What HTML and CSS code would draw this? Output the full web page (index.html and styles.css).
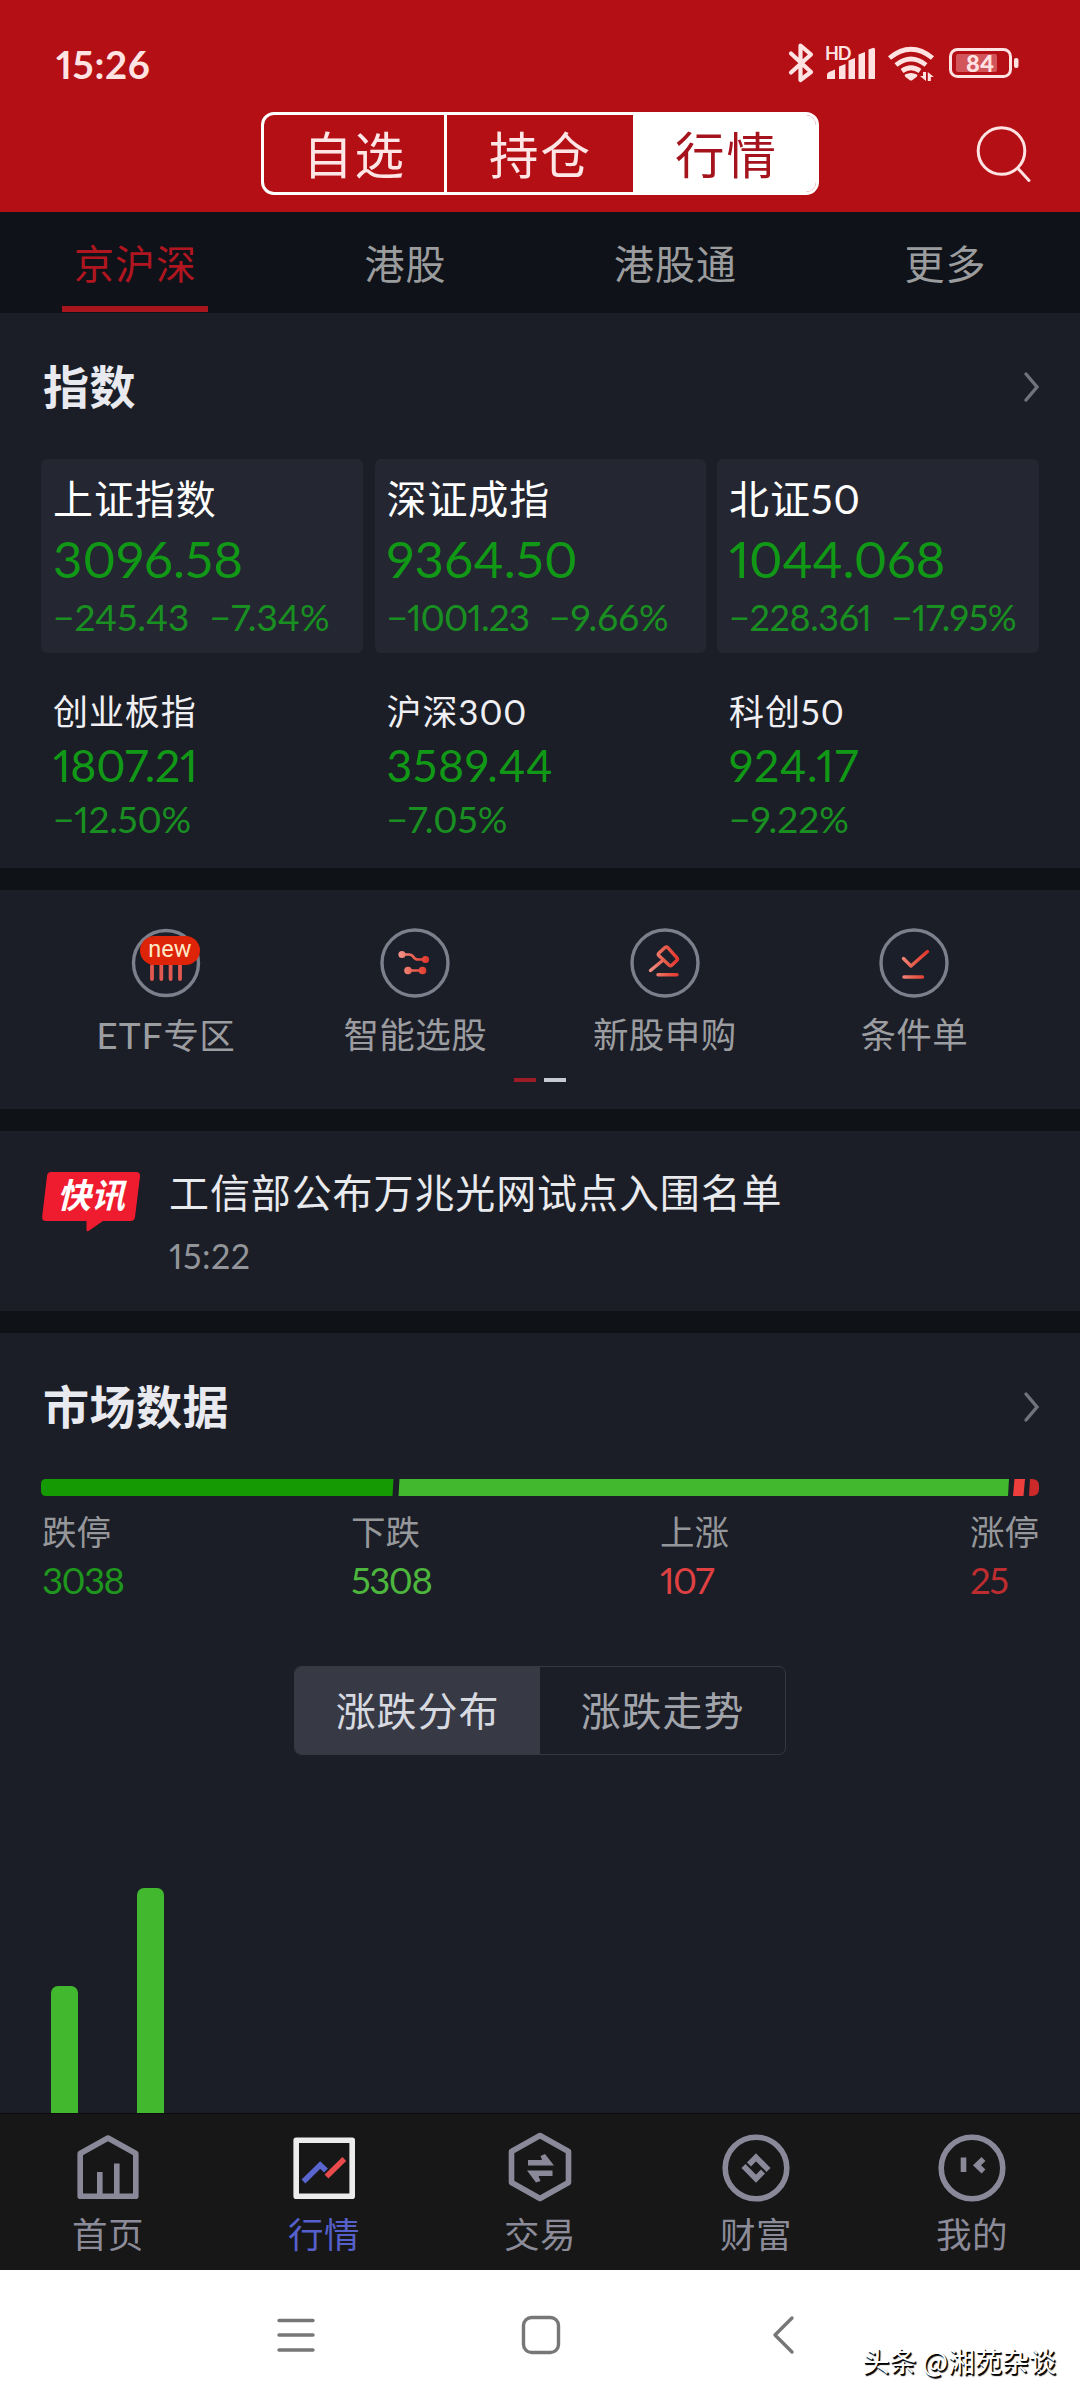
FILE: index.html
```html
<!DOCTYPE html>
<html lang="zh-CN">
<head>
<meta charset="utf-8">
<title>行情</title>
<link rel="stylesheet" href="styles.css">
</head>
<body>
<div class="screen">
  <header class="header">
    <div class="status">
      <span class="clock">15:26</span>
      <svg class="status-icons" width="240" height="52" viewBox="784 37 240 52">
        <path d="M791 53.500L811 72L800.500 80V45.500L811 54.500L791 72.500" fill="none" stroke="#ffe3e3" stroke-width="4.200" stroke-linejoin="round" stroke-linecap="round"/>
        <text x="825" y="59.500" class="hd">HD</text>
        <g fill="#ffe3e3">
          <path d="M827 75q0-2 2-3l6-2.500v9.500h-8zM839 66.500l6.500-2.500v15H839zM848.500 60.500l6.500-2.500v21h-6.500zM858.500 54.500l6.500-2.500v27h-6.500zM868.500 49.500l5-1.800q1.500 0 1.500 1.800v29.500h-6.500z"/>
          <path d="M905 74.500q6-3 12 0q1 1-.5 2.500l-4 3q-1.500 1-3 0l-4-3q-1.500-1.500-.5-2.500z"/>
          <path d="M926 72v9l-6-5h3v-4zM927.800 81v-9l6 5h-3v4z"/>
        </g>
        <g fill="none" stroke="#ffe3e3" stroke-width="4.800">
          <path d="M889.500 58Q911 40.500 932.500 58"/>
          <path d="M896 65Q911 53 926 65"/>
          <path d="M902 71Q911 64.500 920 71"/>
        </g>
        <rect x="950.500" y="49.500" width="60" height="27" rx="7" fill="none" stroke="#ffe3e3" stroke-width="3"/>
        <rect x="1014" y="58" width="4.500" height="10" rx="2" fill="#ffe3e3"/>
        <rect x="956" y="54" width="41" height="18" rx="2" fill="#d2555a"/>
        <text x="980" y="71.500" class="battery" text-anchor="middle">84</text>
      </svg>
    </div>
    <div class="header-row">
      <nav class="segments">
        <a class="segment">自选</a>
        <a class="segment">持仓</a>
        <a class="segment segment-on">行情</a>
      </nav>
      <svg class="search" width="56" height="60" viewBox="0 0 56 60" fill="none" stroke="#ffe3e3" stroke-width="3" stroke-linecap="round">
        <circle cx="25.500" cy="26" r="23.300"/><path d="M42 43.500L53 55.500"/>
      </svg>
    </div>
  </header>

  <nav class="tabs">
    <a class="tab tab-on">京沪深</a>
    <a class="tab">港股</a>
    <a class="tab">港股通</a>
    <a class="tab">更多</a>
  </nav>

  <section class="panel indices">
    <div class="panel-head">
      <h2>指数</h2>
      <svg class="chevron" width="16" height="32" viewBox="0 0 16 32"><path d="M3 3L14 16L3 29"/></svg>
    </div>
    <div class="cards">
      <div class="card">
        <div class="name">上证指数</div>
        <div class="value">3096.58</div>
        <div class="change"><span>−245.43</span><span>−7.34%</span></div>
      </div>
      <div class="card">
        <div class="name">深证成指</div>
        <div class="value">9364.50</div>
        <div class="change"><span class="narrow">−1001.23</span><span>−9.66%</span></div>
      </div>
      <div class="card card-tight">
        <div class="name">北证50</div>
        <div class="value snug">1044.068</div>
        <div class="change"><span>−228.361</span><span>−17.95%</span></div>
      </div>
    </div>
    <div class="minis">
      <div class="mini"><div class="name">创业板指</div><div class="value snug">1807.21</div><div class="change snug">−12.50%</div></div>
      <div class="mini"><div class="name">沪深300</div><div class="value wide">3589.44</div><div class="change">−7.05%</div></div>
      <div class="mini"><div class="name">科创50</div><div class="value wide">924.17</div><div class="change">−9.22%</div></div>
    </div>
  </section>

  <section class="panel tools">
    <svg width="0" height="0" class="defs">
      <defs><linearGradient id="warm" gradientUnits="userSpaceOnUse" x1="18" y1="0" x2="52" y2="0"><stop offset="0" stop-color="#f59a92"/><stop offset=".5" stop-color="#e8604f"/><stop offset="1" stop-color="#e22f28"/></linearGradient></defs>
    </svg>
    <div class="tool-row">
      <div class="tool">
        <div class="tool-icon">
          <svg width="72" height="72" viewBox="0 0 72 72"><circle class="ring" cx="36" cy="36" r="32.500"/><path d="M22 39V52M31.300 38V52M40.600 38V52M50 38V52" class="glyph etf"/></svg>
          <span class="new">new</span>
        </div>
        <span class="tool-label"><span class="latin">ETF</span>专区</span>
      </div>
      <div class="tool">
        <div class="tool-icon">
          <svg width="72" height="72" viewBox="0 0 72 72"><circle class="ring" cx="36" cy="36" r="33"/><path class="glyph thin" d="M23 27.500H30Q33 27.500 34.500 30Q36 32.500 39 32.500H47M29 43.500H43"/><g fill="url(#warm)"><circle cx="23" cy="27.500" r="3.600"/><circle cx="46.500" cy="32.500" r="3.600"/><circle cx="29" cy="43.500" r="3.800"/><circle cx="43.500" cy="43.500" r="3.800"/></g></svg>
        </div>
        <span class="tool-label">智能选股</span>
      </div>
      <div class="tool">
        <div class="tool-icon">
          <svg width="72" height="72" viewBox="0 0 72 72"><circle class="ring" cx="36" cy="36" r="33"/><path class="glyph" d="M29.500 26.500L36 20.500Q37.500 19.300 39 20.800L48 30.800Q49 32 48 33.300L43 38Q41.500 39.500 40 38L29.500 28.200Q28.800 27.300 29.500 26.500ZM33 34L21.500 43.500M29 47.800H48"/></svg>
        </div>
        <span class="tool-label">新股申购</span>
      </div>
      <div class="tool">
        <div class="tool-icon">
          <svg width="72" height="72" viewBox="0 0 72 72"><circle class="ring" cx="36" cy="36" r="33"/><path class="glyph" d="M25.500 31.500L33 39L49.500 24.500M26 50H44.500"/></svg>
        </div>
        <span class="tool-label">条件单</span>
      </div>
    </div>
    <div class="pager"><i class="dot dot-on"></i><i class="dot"></i></div>
  </section>

  <section class="panel news">
    <svg class="flash" width="98" height="60" viewBox="0 0 98 60">
      <path d="M9 0H94Q98.500 0 98 4.500L93 45Q92.500 49 88.500 49H61L46.500 59Q44.500 60 44.500 58V49H4Q-.3 49 .2 44.500L5 4Q5.500 0 9 0Z" fill="#ee1c2e"/>
      <text x="49" y="36" text-anchor="middle" class="flash-text">快讯</text>
    </svg>
    <div class="news-body">
      <div class="news-title">工信部公布万兆光网试点入围名单</div>
      <div class="news-time">15:22</div>
    </div>
  </section>

  <section class="panel market">
    <div class="panel-head">
      <h2>市场数据</h2>
      <svg class="chevron" width="16" height="32" viewBox="0 0 16 32"><path d="M3 3L14 16L3 29"/></svg>
    </div>
    <svg class="ratio" width="998" height="17" viewBox="0 0 998 17">
      <path d="M5 0H352.500L351.500 17H5Q0 17 0 12V5Q0 0 5 0Z" fill="#169a04"/>
      <path d="M358.500 0H968L967 17H357.500Z" fill="#42b82f"/>
      <path d="M973.500 0H984L982.500 17H972Z" fill="#ee3f3d"/>
      <path d="M989 0H991Q998 0 998 7V10Q998 17 991 17H988Z" fill="#cc2a2a"/>
    </svg>
    <div class="counts">
      <div class="count dark-green"><span>跌停</span><b>3038</b></div>
      <div class="count green"><span>下跌</span><b>5308</b></div>
      <div class="count red"><span>上涨</span><b>107</b></div>
      <div class="count dark-red"><span>涨停</span><b>25</b></div>
    </div>
    <div class="switch">
      <a class="switch-item switch-on">涨跌分布</a>
      <a class="switch-item">涨跌走势</a>
    </div>
    <div class="chart">
      <i class="bar" style="height:127px"></i>
      <i class="bar" style="height:225px"></i>
    </div>
  </section>

  <nav class="bottom">
    <a class="item">
      <svg width="76" height="76" viewBox="0 0 76 76"><path class="line" d="M10.200 68.300V25.500L38 10L65.800 25.500V68.300Z"/><path class="stem" d="M29.800 67V44M46.800 67V35.500"/></svg>
      <span>首页</span>
    </a>
    <a class="item item-on">
      <svg width="76" height="76" viewBox="0 0 76 76"><rect x="10.200" y="12.200" width="56" height="56" fill="#171717" stroke="#ececec" stroke-width="5.600" stroke-linejoin="round"/><path d="M17.500 53.500L34.200 37L40 42.500" fill="none" stroke="#5a66cf" stroke-width="5.400"/><path d="M40.500 48.500L58.300 31" stroke="#e94b4b" stroke-width="5.400"/></svg>
      <span>行情</span>
    </a>
    <a class="item">
      <svg width="76" height="76" viewBox="0 0 76 76"><path class="line" d="M38 7.500L66.500 23.500V54.500L38 70.500L9.500 54.500V23.500Z"/><path class="solid" d="M26 32H40L38.500 28L43 26L52 37.500H26ZM50.500 42.500H25L34 54.500L38.500 53L36.500 48H50.500Z"/></svg>
      <span>交易</span>
    </a>
    <a class="item">
      <svg width="76" height="76" viewBox="0 0 76 76"><circle class="line" cx="38" cy="40" r="30.800"/><path class="line coin" d="M31 36.500L38 29.200L50.500 42M45 43.500L38 50.800L25.500 38"/></svg>
      <span>财富</span>
    </a>
    <a class="item">
      <svg width="76" height="76" viewBox="0 0 76 76"><circle class="line" cx="38" cy="40" r="30.800"/><path class="line coin" d="M29.500 29.500V44M49.500 31L43 37.300L49.500 43.500"/></svg>
      <span>我的</span>
    </a>
  </nav>

  <footer class="system">
    <svg width="40" height="36" viewBox="0 0 40 36"><path d="M3 3.500H37M3 18H37M3 33H37"/></svg>
    <svg width="40" height="40" viewBox="0 0 40 40"><rect x="2.500" y="2.500" width="35" height="35" rx="8"/></svg>
    <svg width="30" height="40" viewBox="-6 0 30 40"><path d="M21 3L4 20L21 37"/></svg>
    <span class="watermark">头条 @湘苑杂谈</span>
  </footer>
</div>
</body>
</html>
```
FILE: styles.css
```css
* { box-sizing: border-box; }

body {
  margin: 0;
  background: #0f1217;
  color: #e8e9ee;
  font-family: Lato, "Noto Sans CJK SC", sans-serif;
  font-feature-settings: "pnum";
}

svg { display: block; flex: none; overflow: visible; }

.screen {
  width: 1080px;
  height: 2400px;
  display: flex;
  flex-direction: column;
  overflow: hidden;
}

/* header */
.header { height: 212px; flex: none; background: #b40f14; }
.status {
  height: 112px;
  padding: 37px 56px 0 56px;
  display: flex;
  justify-content: space-between;
  align-items: flex-start;
}
.clock { font-size: 38.500px; line-height: 54px; font-weight: 700; color: #ffe3e3; letter-spacing: .7px; }
.hd { font-size: 18px; fill: #ffe3e3; font-weight: 700; letter-spacing: -1px; }
.battery { font-size: 23.500px; fill: #ffe3e3; font-weight: 900; }

.header-row { display: flex; justify-content: flex-end; align-items: flex-start; padding-right: 48px; }
.segments {
  width: 558px;
  height: 83px;
  margin-right: 157px;
  display: grid;
  grid-template-columns: 183px 189px 1fr;
  border: 3px solid #fff;
  border-radius: 13px;
  overflow: hidden;
}
.segment {
  padding: 3px 0 0 1px;
  border-right: 3px solid #fff;
  font-size: 49.500px;
  letter-spacing: 2px;
  line-height: 74px;
  text-align: center;
  color: #ffe6e6;
}
.segment-on { background: #fff; color: #a5131c; border-right: 0; }
.search { margin-top: 13px; }

/* market tabs */
.tabs { height: 101px; flex: none; background: #0f1218; display: grid; grid-template-columns: repeat(4, 270px); justify-items: center; }
.tab { height: 100px; min-width: 146px; text-align: center; padding-left: 1px; line-height: 104px; font-size: 40px; letter-spacing: 1px; color: #9b9c9e; }
.tab-on { color: #b01620; border-bottom: 6px solid #a9151c; }

/* panels */
.panel { background: #1b1e26; padding: 0 41px; margin-bottom: 22px; flex: none; }
.panel-head { display: flex; justify-content: space-between; align-items: center; height: 60px; padding-left: 2px; }
h2 { margin: 0; font-size: 46px; line-height: 60px; letter-spacing: .5px; font-weight: 700; color: #e9eaef; }
.chevron path { fill: none; stroke: #70737b; stroke-width: 3.400; stroke-linecap: round; }

/* indices */
.indices { height: 555px; padding-top: 44px; }
.cards, .minis { display: grid; grid-template-columns: 322px 331px 322px; column-gap: 11.500px; }
.cards { margin-top: 42px; }
.card { height: 194px; padding: 16px 0 0 12px; border-radius: 6px; background: #242731; white-space: nowrap; }
.name { color: #fff; font-size: 40px; line-height: 48px; letter-spacing: .9px; }
.value { color: #119816; font-size: 51px; line-height: 60px; margin-top: 6px; letter-spacing: .2px; }
.change { color: #198f22; font-size: 37px; line-height: 44px; margin-top: 6px; display: flex; gap: 20px; }
.card-tight .change { font-size: 36px; letter-spacing: -.4px; }
.minis { margin-top: 36px; }
.mini { padding-left: 12px; }
.mini .name { font-size: 35px; line-height: 44px; color: #f0f0f4; }
.mini .value { font-size: 44.500px; line-height: 54px; margin-top: 5px; }
.mini .change { margin-top: 6px; line-height: 42px; }
.snug { letter-spacing: -.3px; }
.narrow { letter-spacing: -1px; }
.wide { letter-spacing: .8px; }

/* tool shortcuts */
.tools { height: 219px; padding-top: 37px; }
.defs { position: absolute; }
.tool-row { display: grid; grid-template-columns: repeat(4, 1fr); }
.tool { display: flex; flex-direction: column; align-items: center; }
.tool-icon { position: relative; height: 72px; }
.ring { fill: #1b1f2a; stroke: #7c7f8c; stroke-width: 3.400; }
.glyph { fill: none; stroke: url(#warm); stroke-width: 3.400; stroke-linecap: round; stroke-linejoin: round; }
.etf { stroke: #e0584f; stroke-width: 3.800; }
.thin { stroke-width: 2.600; }
.new {
  position: absolute;
  left: 10px;
  top: 9px;
  width: 60px;
  height: 29px;
  border-radius: 15px;
  background: #de2408;
  color: #ffe9c9;
  font: 23.500px/27px Roboto, sans-serif;
  text-align: center;
}
.tool-label { margin-top: 12px; font-size: 35.500px; line-height: 48px; letter-spacing: .4px; color: #9c9da1; }
.latin { font-size: 37px; letter-spacing: 1px; }
.pager { margin-top: 18px; display: flex; justify-content: center; gap: 8px; }
.dot { width: 22px; height: 4px; background: #c5cad5; }
.dot-on { background: #9b1c25; }

/* news */
.news { height: 180px; padding-top: 38px; display: flex; }
.flash { margin: 3px 29px 0 1px; }
.flash-text { font-family: "Noto Sans CJK SC", sans-serif; font-size: 34px; font-weight: 700; font-style: italic; fill: #fff; }
.news-title { font-size: 40px; line-height: 48px; letter-spacing: .9px; color: #e9eaee; }
.news-time { margin-top: 15px; font-size: 34px; line-height: 48px; letter-spacing: .5px; color: #93959a; }

/* market data */
.market { height: 780px; margin-bottom: 0; padding-top: 44px; display: flex; flex-direction: column; }
.ratio { margin-top: 42px; }
.counts { display: grid; grid-template-columns: 309px 309px 310px auto; padding-left: 1px; margin-top: 13px; }
.count { display: flex; flex-direction: column; font-size: 34.500px; line-height: 46px; color: #95979b; white-space: nowrap; }
.count b { margin-top: 1px; font-weight: 400; font-size: 36.500px; line-height: 48px; letter-spacing: -1.500px; }
.dark-green b { color: #1f961d; }
.green b { color: #4cb63d; }
.red b { color: #df4143; }
.dark-red b { color: #bd2d30; }
.switch { width: 492px; height: 89px; margin: 62px auto 0; display: grid; grid-template-columns: 1fr 1fr; border: 1px solid #353841; border-radius: 7px; overflow: hidden; }
.switch-item { text-align: center; font-size: 40px; line-height: 89px; letter-spacing: .9px; color: #a2a4ab; }
.switch-on { background: #373944; color: #d7d9e0; }
.chart { flex: 1; display: flex; align-items: flex-end; gap: 59px; padding-left: 10px; }
.bar { width: 27px; background: #42b82f; border-radius: 7px 7px 0 0; }

/* bottom navigation */
.bottom { height: 157px; flex: none; background: #171717; border-top: 1px solid #0b0b0d; display: grid; grid-template-columns: repeat(5, 216px); }
.item { display: flex; flex-direction: column; align-items: center; padding-top: 14px; color: #8b8b99; font-size: 35.500px; line-height: 48px; letter-spacing: .4px; }
.item span { margin-top: 7px; }
.item-on { color: #5560cc; }
.line { fill: none; stroke: #8a8999; stroke-width: 5.600; stroke-linejoin: round; }
.coin { stroke-linejoin: miter; }
.stem { stroke: #8a8999; stroke-width: 5.600; }
.solid { fill: #8a8999; }

/* system navigation */
.system { position: relative; height: 130px; flex: none; background: #fff; display: flex; align-items: center; justify-content: space-between; padding: 0 285px 0 276px; }
.system svg { fill: none; stroke: #777; stroke-width: 3.400; stroke-linecap: round; stroke-linejoin: round; }
.watermark {
  position: absolute;
  right: 24px;
  bottom: 22px;
  font-family: "Noto Sans CJK SC", sans-serif;
  font-size: 27px;
  line-height: 34px;
  color: #fff;
  text-shadow: 1.500px 1.500px 1px #000, 1px 1px 0 #000;
  white-space: nowrap;
}
```
